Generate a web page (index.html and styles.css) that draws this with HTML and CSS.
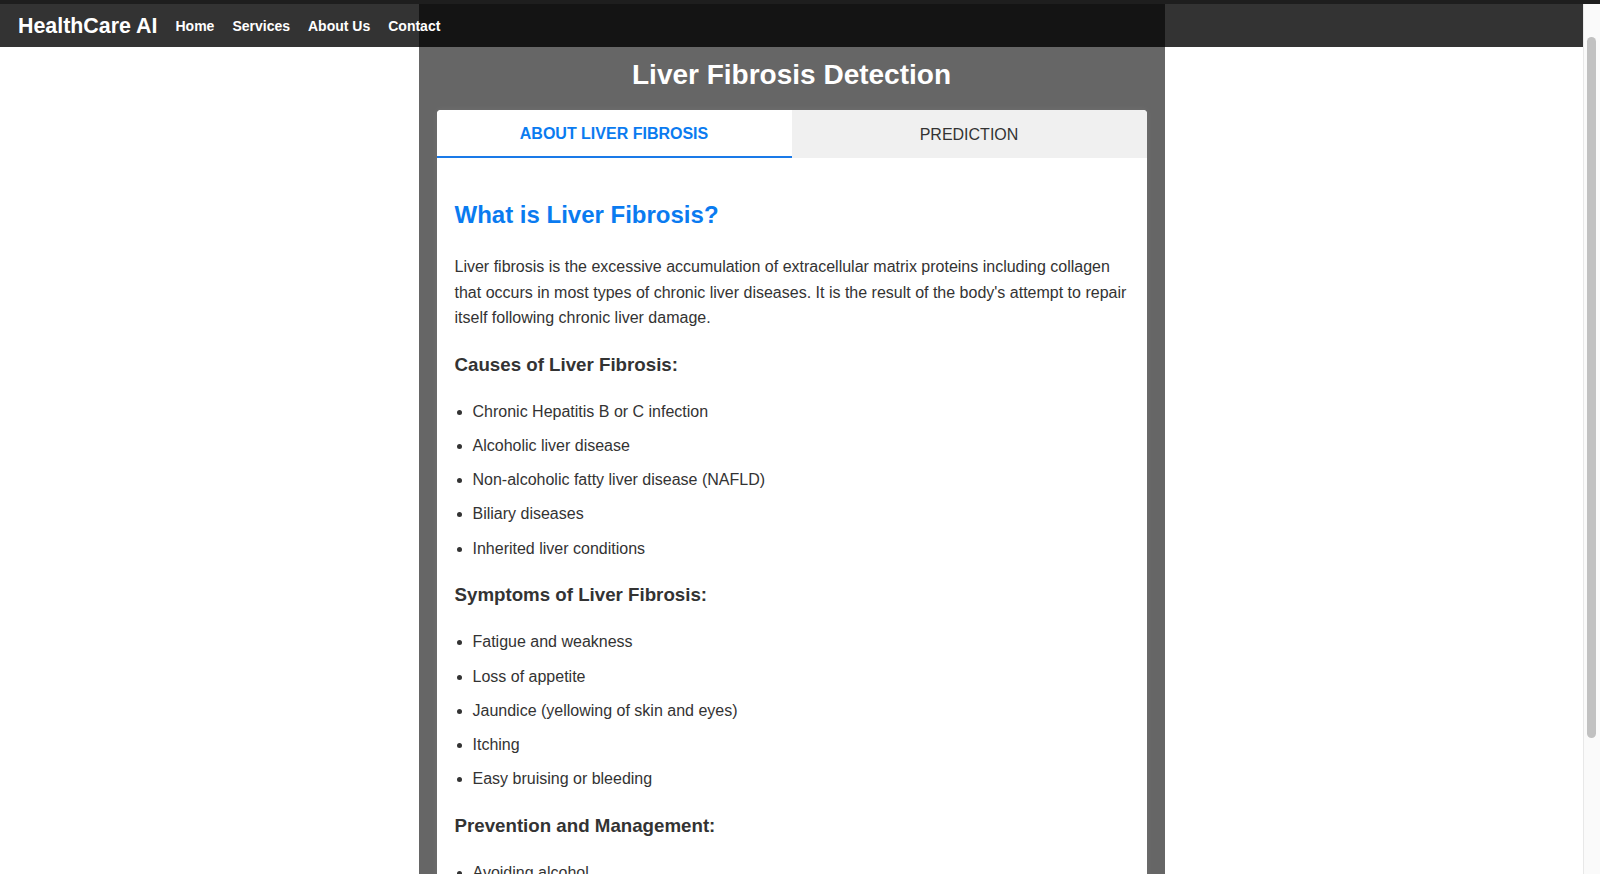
FILE: index.html
```html
<!DOCTYPE html>
<html lang="en">
<head>
<meta charset="utf-8">
<title>Liver Fibrosis Detection</title>
<link rel="stylesheet" href="styles.css">
</head>
<body>
<div class="chrome"></div>
<div class="window">
  <div class="viewport">
    <nav class="navbar">
      <span class="brand">HealthCare AI</span>
      <a href="#">Home</a>
      <a href="#">Services</a>
      <a href="#">About Us</a>
      <a href="#">Contact</a>
    </nav>
    <main class="container">
      <h1 class="page-title">Liver Fibrosis Detection</h1>
      <section class="card">
        <div class="tabs">
          <div class="tab active">About Liver Fibrosis</div>
          <div class="tab">Prediction</div>
        </div>
        <div class="tab-content">
          <h2 class="section-title">What is Liver Fibrosis?</h2>
          <p class="text">Liver fibrosis is the excessive accumulation of extracellular matrix proteins including collagen that occurs in most types of chronic liver diseases. It is the result of the body's attempt to repair itself following chronic liver damage.</p>
          <h3 class="sub-title">Causes of Liver Fibrosis:</h3>
          <ul class="list">
            <li>Chronic Hepatitis B or C infection</li>
            <li>Alcoholic liver disease</li>
            <li>Non-alcoholic fatty liver disease (NAFLD)</li>
            <li>Biliary diseases</li>
            <li>Inherited liver conditions</li>
          </ul>
          <h3 class="sub-title">Symptoms of Liver Fibrosis:</h3>
          <ul class="list">
            <li>Fatigue and weakness</li>
            <li>Loss of appetite</li>
            <li>Jaundice (yellowing of skin and eyes)</li>
            <li>Itching</li>
            <li>Easy bruising or bleeding</li>
          </ul>
          <h3 class="sub-title">Prevention and Management:</h3>
          <ul class="list">
            <li>Avoiding alcohol</li>
            <li>Maintaining a healthy weight</li>
            <li>Regular exercise</li>
            <li>Regular medical check-ups</li>
          </ul>
        </div>
      </section>
    </main>
  </div>
  <div class="scrollbar"><div class="thumb"></div></div>
</div>
</body>
</html>
```

FILE: styles.css
```css
html, body {
  margin: 0;
  height: 100%;
  overflow: hidden;
}

body {
  display: flex;
  flex-direction: column;
  font-family: "Liberation Sans", Arial, Helvetica, sans-serif;
  line-height: 1.6;
  color: #333;
  background: #fff;
}

.chrome {
  flex: none;
  height: 4px;
  background: #1e1e1e;
}

.window {
  flex: 1;
  display: flex;
  min-height: 0;
}

.viewport {
  flex: 1;
  position: relative;
  overflow: hidden;
  background: #fff;
}

.navbar {
  position: absolute;
  top: 0;
  left: 0;
  right: 0;
  z-index: 10;
  height: 43px;
  box-sizing: border-box;
  padding: 1px 18px 0;
  display: flex;
  align-items: center;
  gap: 18px;
  background: rgba(0, 0, 0, 0.8);
}

.brand {
  font-size: 21.4px;
  font-weight: bold;
  color: #fff;
}

.navbar a {
  font-size: 14px;
  font-weight: bold;
  color: #fff;
  text-decoration: none;
}

.container {
  width: 710px;
  margin: 0 auto;
  padding: 18px 18px 40px;
  background: rgba(0, 0, 0, 0.6);
}

.page-title {
  margin: 31px 0 12px;
  font-size: 28px;
  line-height: 1.6;
  text-align: center;
  color: #fff;
}

.card {
  background: #fff;
  border-radius: 4px;
  overflow: hidden;
  box-shadow: 0 0 6px rgba(255, 255, 255, 0.08);
}

.tabs {
  display: flex;
}

.tab {
  flex: 1;
  padding: 16px 0 12px;
  font-size: 16px;
  line-height: 18px;
  text-align: center;
  text-transform: uppercase;
  color: #333;
  background: #f0f0f0;
  border-bottom: 2px solid transparent;
}

.tab.active {
  padding: 15px 0 13px;
  background: #fff;
  color: #0a7bf0;
  font-weight: bold;
  border-bottom-color: #1a7ae8;
}

.tab-content {
  padding: 18px;
}

.section-title {
  margin: 0.83em 0;
  font-size: 24px;
  color: #0a7bf0;
}

.text {
  margin: 1em 0;
  font-size: 16px;
}

.sub-title {
  margin: 19px 0 19.1px;
  font-size: 18.72px;
  color: #333;
}

.list {
  margin: 1em 0;
  padding-left: 18px;
}

.list li {
  margin-bottom: 0.54em;
}

.scrollbar {
  flex: none;
  width: 17px;
  box-sizing: border-box;
  padding-top: 33px;
  background: #fafafa;
  border-left: 1px solid #e8e8e8;
}

.thumb {
  width: 9px;
  height: 701px;
  margin-left: 3px;
  border-radius: 5px;
  background: #c1c1c1;
}
```
